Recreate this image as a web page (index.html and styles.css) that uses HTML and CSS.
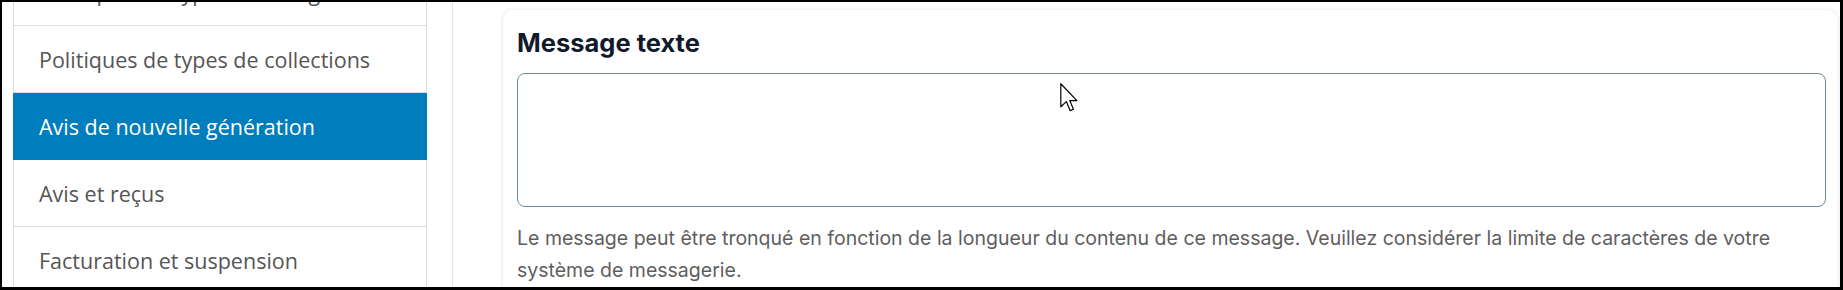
FILE: index.html
```html
<!DOCTYPE html>
<html lang="fr">
<head>
<meta charset="utf-8">
<title>Message texte</title>
<link rel="stylesheet" href="styles.css">
</head>
<body>
<div class="frame">
  <nav class="sidebar">
    <ul class="menu">
      <li class="item">Politiques de types de charges</li>
      <li class="item">Politiques de types de collections</li>
      <li class="item active">Avis de nouvelle génération</li>
      <li class="item">Avis et reçus</li>
      <li class="item">Facturation et suspension</li>
    </ul>
  </nav>
  <main class="main">
    <section class="card">
      <h2 class="title">Message texte</h2>
      <div class="textarea"></div>
      <p class="help">Le message peut être tronqué en fonction de la longueur du contenu de ce message. Veuillez considérer la limite de caractères de votre système de messagerie.</p>
    </section>
  </main>
  <svg class="cursor" width="18" height="29" viewBox="0 0 12 19.5" aria-hidden="true">
    <path d="M0.5 0.5 L0.5 16 L4.2 12.5 L6.8 18.6 L9 17.6 L6.5 11.8 L11.3 11.8 Z" fill="#fff" stroke="#000" stroke-width="0.8" stroke-linejoin="round"/>
  </svg>
</div>
</body>
</html>
```
FILE: styles.css
```css
html, body {
  margin: 0;
  padding: 0;
  background: #000;
}
body {
  width: 1843px;
  height: 290px;
  box-sizing: border-box;
  border-style: solid;
  border-color: #000;
  border-width: 2px 3px 3px 2px;
  overflow: hidden;
}
.frame {
  position: relative;
  display: flex;
  height: 285px;
  background: #fff;
  overflow: hidden;
  padding-left: 11px;
}
.sidebar {
  width: 414px;
  flex: none;
  margin-top: -43px;
}
.menu {
  list-style: none;
  margin: 0;
  padding: 0;
}
.item {
  height: 66px;
  box-sizing: content-box;
  display: flex;
  align-items: center;
  padding-left: 25px;
  border-left: 1px solid #dedede;
  border-right: 1px solid #dedede;
  border-bottom: 1px solid #dedede;
  font-family: "Open Sans", "Noto Sans", sans-serif;
  font-size: 21.5px;
  color: #555;
}
.item.active {
  background: #007dbd;
  border-color: #007dbd;
  color: #fff;
}
.main {
  flex: 1;
  margin-left: 25px;
  border-left: 1px solid #e4e4e4;
  padding-left: 50px;
  padding-top: 8px;
  background: #fff;
}
.card {
  background: #fff;
  border-radius: 10px 10px 0 0;
  box-shadow: 0 0 4px rgba(0, 0, 0, 0.12), 0 1px 2px rgba(0, 0, 0, 0.06);
  padding: 18px 12px 0 14px;
  height: 400px;
  margin-right: 2px;
  font-family: Inter, "Liberation Sans", sans-serif;
}
.title {
  margin: 0;
  font-size: 25.5px;
  line-height: 30px;
  font-weight: 700;
  color: #111a2c;
}
.textarea {
  margin-top: 15px;
  height: 132px;
  border: 1px solid #6f8ba2;
  border-radius: 8px;
  background: #fff;
}
.help {
  margin: 15px 0 0;
  font-size: 19.5px;
  line-height: 32px;
  color: #5e5e5e;
}
.cursor {
  position: absolute;
  left: 1058px;
  top: 81px;
}
```
